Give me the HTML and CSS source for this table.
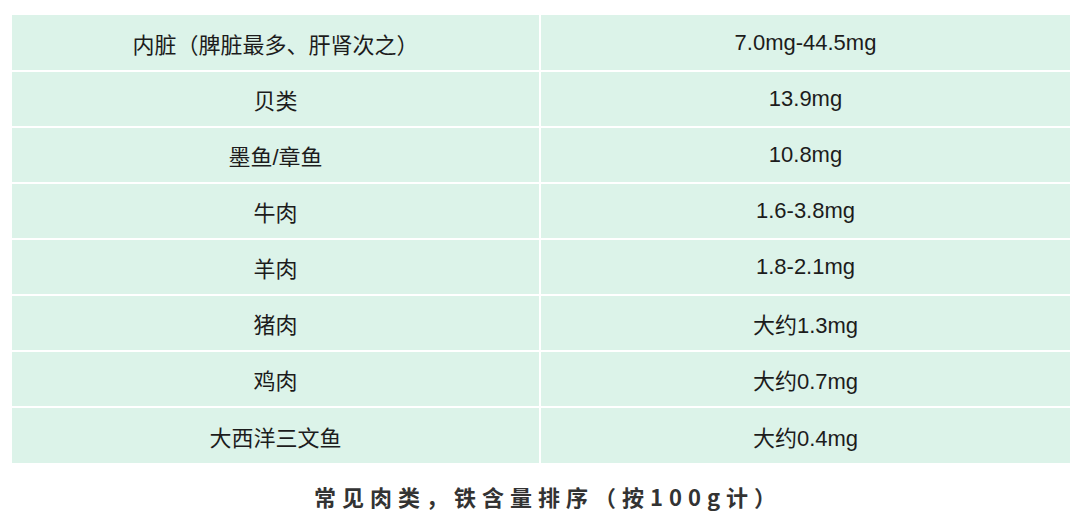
FILE: index.html
```html
<!DOCTYPE html>
<html lang="zh-CN">
<head>
<meta charset="utf-8">
<title>常见肉类铁含量</title>
<link rel="stylesheet" href="styles.css">
</head>
<body>
<div class="page">
  <table class="iron">
    <tbody>
      <tr><td>内脏（脾脏最多、肝肾次之）</td><td>7.0mg-44.5mg</td></tr>
      <tr><td>贝类</td><td>13.9mg</td></tr>
      <tr><td>墨鱼/章鱼</td><td>10.8mg</td></tr>
      <tr><td>牛肉</td><td>1.6-3.8mg</td></tr>
      <tr><td>羊肉</td><td>1.8-2.1mg</td></tr>
      <tr><td>猪肉</td><td>大约1.3mg</td></tr>
      <tr><td>鸡肉</td><td>大约0.7mg</td></tr>
      <tr><td>大西洋三文鱼</td><td>大约0.4mg</td></tr>
    </tbody>
  </table>
  <p class="caption">常见肉类，铁含量排序（按100g计）</p>
</div>
</body>
</html>
```
FILE: styles.css
```css
html, body {
  margin: 0;
  padding: 0;
  background: #ffffff;
}
.page {
  width: 1080px;
  height: 520px;
  padding: 15px 10px 0 12px;
  box-sizing: border-box;
  font-family: "Liberation Sans", "Noto Sans CJK SC", sans-serif;
}
.iron {
  width: 1058px;
  border-collapse: collapse;
  table-layout: fixed;
  background: #dcf3e9;
}
.iron td {
  height: 56px;
  padding: 0;
  box-sizing: border-box;
  text-align: center;
  vertical-align: middle;
  font-size: 22px;
  color: #1c1c1c;
  border: 2px solid #ffffff;
}
.iron tr:first-child td { border-top: none; }
.iron tr:last-child td { border-bottom: none; }
.iron td:first-child { width: 528px; border-left: none; }
.iron td:last-child { border-right: none; }
.caption {
  margin: 18px 0 0;
  padding-left: 14px;
  text-align: center;
  font-family: "Noto Sans CJK SC", sans-serif;
  font-weight: 700;
  font-size: 22px;
  letter-spacing: 6px;
  color: #333333;
  line-height: 30px;
}
```
